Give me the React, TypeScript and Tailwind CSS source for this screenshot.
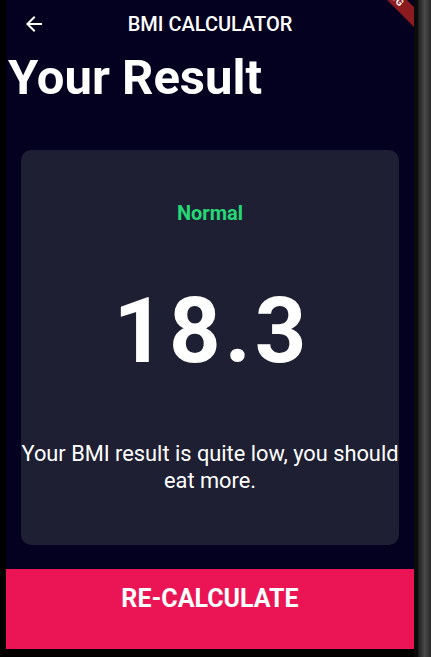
const BackArrow = () => (
  <svg width="24" height="24" viewBox="0 0 24 24" fill="white">
    <path d="M20 11H7.83l5.59-5.59L12 4l-8 8 8 8 1.41-1.41L7.83 13H20v-2z" />
  </svg>
);

const App = () => {
  return (
    <div className="w-[431px] h-[657px] bg-black flex font-['Roboto',sans-serif]">
      {/* phone screen */}
      <div className="ml-[6px] w-[408px] h-[649px] relative overflow-hidden bg-[#03011f] flex flex-col">
        {/* app bar */}
        <div className="h-[48px] flex items-center relative shrink-0">
          <div className="w-[56px] flex justify-center">
            <BackArrow />
          </div>
          <div className="absolute inset-0 flex items-center justify-center pointer-events-none">
            <span className="text-white text-[20px] font-medium">BMI CALCULATOR</span>
          </div>
        </div>

        <h1 className="text-white text-[49px] font-bold leading-[56px] pl-[2px] mt-[2px]">Your Result</h1>

        {/* result card */}
        <div className="mx-[15px] mt-[44px] h-[395px] rounded-[10px] bg-[#1e1f33] flex flex-col items-center text-center">
          <p className="mt-[51px] text-[#24d876] text-[20px] font-bold leading-[24px]">Normal</p>
          <p className="mt-[57px] pl-[4px] text-white text-[90px] font-bold leading-[100px] tracking-[4px]">18.3</p>
          <p className="mt-[59px] text-white text-[21.8px] leading-[26.5px] -mx-[2px]">
            <span className="whitespace-nowrap">Your BMI result is quite low, you should</span>
            <br />
            eat more.
          </p>
        </div>

        {/* bottom button */}
        <div className="mt-auto h-[80px] bg-[#eb1555] flex justify-center pt-[13px]">
          <span className="text-white text-[25px] font-bold leading-[34px]">RE-CALCULATE</span>
        </div>

        {/* debug banner */}
        <div className="absolute left-[334px] top-[-14px] w-[100px] h-[14px] rotate-45 bg-[#8c1b1f] flex items-center justify-center">
          <span className="text-white text-[10px] font-bold leading-none tracking-[0.5px]">DEBUG</span>
        </div>
      </div>

      {/* device frame */}
      <div className="w-[4px] h-full bg-[#0b0b0b]" />
      <div className="w-[13px] h-full bg-gradient-to-r from-[#1c1c1c] via-[#4a4a4a] to-[#2a2a2a]" />
    </div>
  );
};

export default App;
